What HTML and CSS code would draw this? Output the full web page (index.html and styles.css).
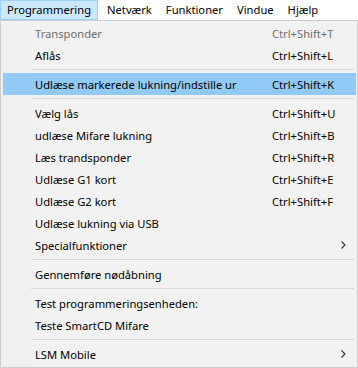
FILE: index.html
```html
<!DOCTYPE html>
<html>
<head>
<meta charset="utf-8">
<link rel="stylesheet" href="styles.css">
</head>
<body>
<div class="menubar">
  <span class="top active">Programmering</span>
  <span class="top first">Netværk</span>
  <span class="top">Funktioner</span>
  <span class="top">Vindue</span>
  <span class="top">Hjælp</span>
</div>
<div class="dropdown">
  <div class="item disabled"><span class="label">Transponder</span><span class="key">Ctrl+Shift+T</span></div>
  <div class="item"><span class="label">Aflås</span><span class="key">Ctrl+Shift+L</span></div>
  <div class="sep"></div>
  <div class="item hover"><span class="label">Udlæse markerede lukning/indstille ur</span><span class="key">Ctrl+Shift+K</span></div>
  <div class="sep"></div>
  <div class="item"><span class="label">Vælg lås</span><span class="key">Ctrl+Shift+U</span></div>
  <div class="item"><span class="label">udlæse Mifare lukning</span><span class="key">Ctrl+Shift+B</span></div>
  <div class="item"><span class="label">Læs trandsponder</span><span class="key">Ctrl+Shift+R</span></div>
  <div class="item"><span class="label">Udlæse G1 kort</span><span class="key">Ctrl+Shift+E</span></div>
  <div class="item"><span class="label">Udlæse G2 kort</span><span class="key">Ctrl+Shift+F</span></div>
  <div class="item"><span class="label">Udlæse lukning via USB</span><span class="key"></span></div>
  <div class="item"><span class="label">Specialfunktioner</span><span class="key arrow"><svg width="5" height="8" viewBox="0 0 5 8"><path d="M0.5 0.5 L4 4 L0.5 7.5" fill="none" stroke="#333" stroke-width="1.1"/></svg></span></div>
  <div class="sep"></div>
  <div class="item"><span class="label">Gennemføre nødåbning</span><span class="key"></span></div>
  <div class="sep"></div>
  <div class="item"><span class="label">Test programmeringsenheden:</span><span class="key"></span></div>
  <div class="item"><span class="label">Teste SmartCD Mifare</span><span class="key"></span></div>
  <div class="sep"></div>
  <div class="item"><span class="label">LSM Mobile</span><span class="key arrow"><svg width="5" height="8" viewBox="0 0 5 8"><path d="M0.5 0.5 L4 4 L0.5 7.5" fill="none" stroke="#333" stroke-width="1.1"/></svg></span></div>
</div>
</body>
</html>
```
FILE: styles.css
```css
html, body {
  margin: 0;
  padding: 0;
  background: #ffffff;
}
body {
  width: 358px;
  height: 368px;
  overflow: hidden;
  font-family: "Noto Sans", "Open Sans", sans-serif;
  font-size: 11.2px;
  color: #000;
}
.menubar {
  display: flex;
  height: 20px;
  background: #fff;
}
.top {
  box-sizing: border-box;
  height: 20px;
  line-height: 18px;
  padding: 0 6px;
  border: 1px solid transparent;
}
.top.first {
  margin-left: 2px;
}
.top.active {
  background: #cce8ff;
  border-color: #99d1ff;
  padding: 0 6px 0 6px;
}
.dropdown {
  box-sizing: border-box;
  width: 358px;
  height: 348px;
  border: 1px solid #cccccc;
  padding: 1px 1px 1px 2px;
  background: linear-gradient(to right, #f0f0f0 0, #f0f0f0 31px, #f2f2f2 31px);
}
.item {
  display: flex;
  align-items: center;
  height: 22px;
  padding-left: 32px;
}
.label {
  flex: 1;
  white-space: nowrap;
}
.key {
  width: 84px;
  white-space: nowrap;
}
.arrow {
  display: flex;
  justify-content: flex-end;
  padding-right: 10px;
  box-sizing: border-box;
}
.disabled {
  color: #6d6d6d;
}
.hover {
  background: #91c9f7;
}
.sep {
  height: 1px;
  background: #d7d7d7;
  margin: 3px 2px 3px 28px;
}
```
